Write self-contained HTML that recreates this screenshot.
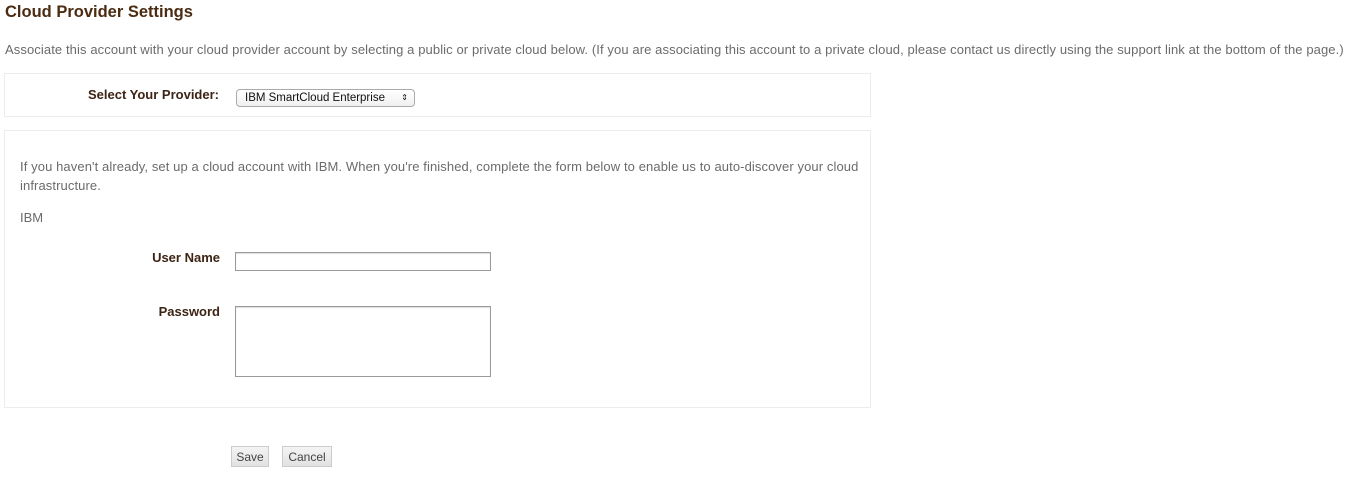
<!DOCTYPE html>
<html><head><style>
body{margin:0;width:1354px;height:481px;background:#fff;font-family:"Liberation Sans",Arial,sans-serif;position:relative;overflow:hidden}
.a{position:absolute;white-space:nowrap}
h1{position:absolute;left:5px;top:3px;margin:0;font-size:16.5px;font-weight:bold;color:#4b2c12}
.desc{left:5px;top:42px;font-size:13px;letter-spacing:0.1px;color:#6b6b6b}
.box{position:absolute;left:4px;width:865px;border:1px solid #ececec}
.lbl{font-size:13px;font-weight:bold;color:#3d2414;text-align:right}
.p{left:20px;top:157px;font-size:13px;letter-spacing:0.1px;color:#6b6b6b;line-height:19px;white-space:normal;width:840px}
.inp{position:absolute;border:1px solid #9a9a9a;background:#fff;box-shadow:inset 0 1px 1px #ddd}
.btn{position:absolute;top:446px;height:21px;border:1px solid #ccc;background:linear-gradient(#f4f4f4,#e2e2e2);font-size:12px;color:#444;text-align:center;line-height:20px;box-sizing:border-box}
</style></head><body>
<h1>Cloud Provider Settings</h1>
<div class="a desc">Associate this account with your cloud provider account by selecting a public or private cloud below. (If you are associating this account to a private cloud, please contact us directly using the support link at the bottom of the page.)</div>
<div class="box" style="top:73px;height:42px"></div>
<div class="a lbl" style="right:1135px;top:87px">Select Your Provider:</div>
<div class="a" style="left:236px;top:89px;width:179px;height:18px;border:1px solid #aaa;border-radius:4px;box-sizing:border-box;background:linear-gradient(#fff,#f0f0f0);font-size:11.5px;line-height:16px;padding-left:8px;color:#111">IBM SmartCloud Enterprise<span style="position:absolute;right:6px;top:0;font-size:8px">&#8661;</span></div>
<div class="box" style="top:130px;height:276px"></div>
<div class="a p">If you haven't already, set up a cloud account with IBM. When you're finished, complete the form below to enable us to auto-discover your cloud infrastructure.</div>
<div class="a" style="left:20px;top:210px;font-size:13px;color:#6b6b6b">IBM</div>
<div class="a lbl" style="right:1134px;top:250px">User Name</div>
<div class="inp" style="left:235px;top:252px;width:254px;height:17px"></div>
<div class="a lbl" style="right:1134px;top:304px">Password</div>
<div class="inp" style="left:235px;top:306px;width:254px;height:69px"></div>
<div class="btn" style="left:231px;width:38px">Save</div>
<div class="btn" style="left:282px;width:50px">Cancel</div>
</body></html>
